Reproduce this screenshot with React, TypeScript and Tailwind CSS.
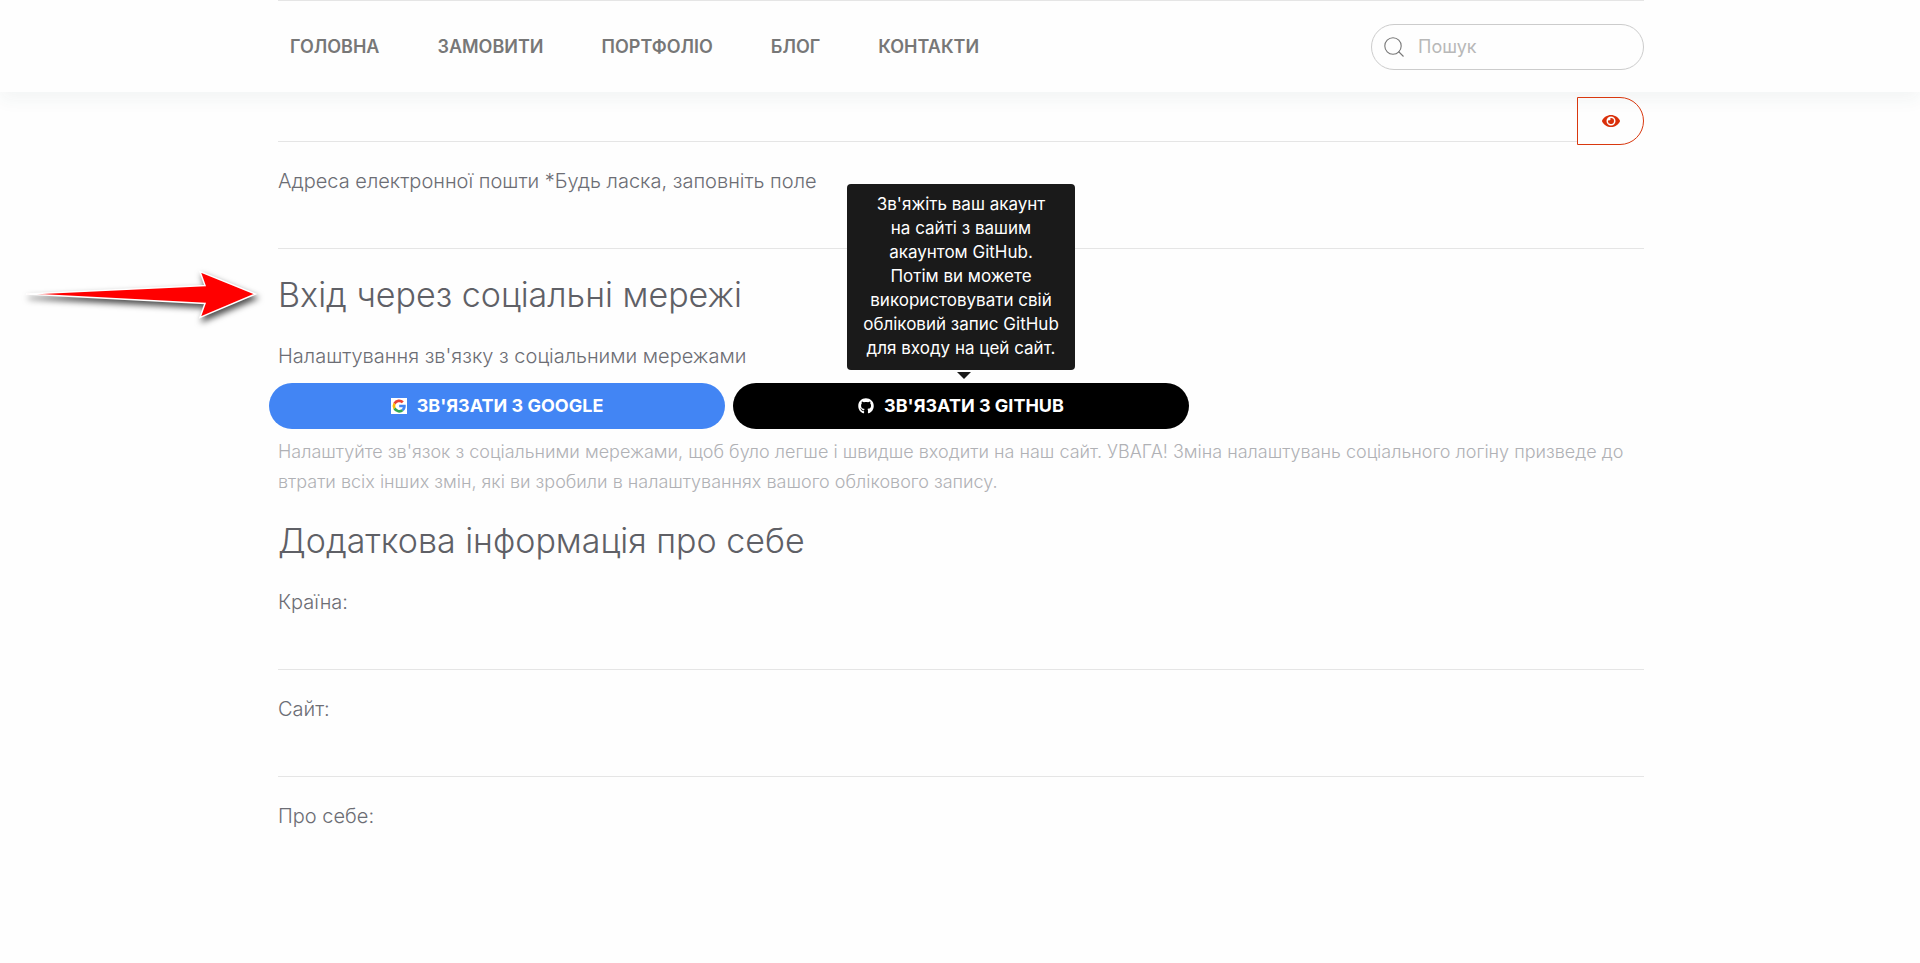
import { FaEye } from 'react-icons/fa';
import { FaGithub } from 'react-icons/fa6';

const links = ['Головна', 'Замовити', 'Портфоліо', 'Блог', 'Контакти'];

const App = () => {
  return (
    <div className="min-h-screen bg-[#fefefe] font-['Inter','Noto_Sans',sans-serif] text-xl text-[#6c6d74]">
      <Header />

      <main className="pl-0.5">
        <div className="relative mx-auto max-w-[1366px]">
          <button
            type="button"
            aria-label="Показати"
            className="absolute right-0 top-[5px] z-10 flex h-12 w-[67px] items-center justify-center rounded-r-full border border-[#d9380f] text-lg text-[#d9300a]"
          >
            <FaEye />
          </button>
          <div className="mr-[67px] h-[50px] border-b border-[#e5e5e5]" />

          <Field id="email" label="Адреса електронної пошти *Будь ласка, заповніть поле" />

          {/* Social login */}
          <section>
            <div className="relative mt-[21px]">
              <Arrow />
              <h2 className="text-[34px] font-light leading-[50px] text-[#5f6066]">Вхід через соціальні мережі</h2>
            </div>
            <p className="mt-[21px] font-light leading-[30px]">Налаштування зв'язку з соціальними мережами</p>
            <div className="-ml-[9px] mt-3 flex gap-2">
              <button
                type="button"
                className="flex h-[46px] w-[456px] items-center justify-center gap-2.5 rounded-full bg-[#4285f4] text-lg font-bold uppercase text-white"
              >
                <GoogleIcon />
                Зв'язати з Google
              </button>
              <div className="relative">
                <button
                  type="button"
                  aria-describedby="github-tip"
                  className="flex h-[46px] w-[456px] items-center justify-center gap-2.5 rounded-full bg-black text-lg font-bold uppercase text-white"
                >
                  <FaGithub className="text-base" />
                  Зв'язати з GitHub
                </button>
                <Tooltip />
              </div>
            </div>
            <p className="mt-2 text-lg font-light leading-[30px] text-[#b0b1b5]">
              Налаштуйте зв'язок з соціальними мережами, щоб було легше і швидше входити на наш сайт. УВАГА! Зміна
              налаштувань соціального логіну призведе до втрати всіх інших змін, які ви зробили в налаштуваннях вашого
              облікового запису.
            </p>
          </section>

          {/* About */}
          <section>
            <h2 className="mt-[22px] text-[34px] font-light leading-[44px] text-[#5f6066]">
              Додаткова інформація про себе
            </h2>
            <Field id="country" label="Країна:" />
            <Field id="site" label="Сайт:" />
            <div className="pt-6">
              <label htmlFor="about" className="block font-light leading-[30px]">Про себе:</label>
              <textarea id="about" className="mt-2 block h-20 w-full resize-none bg-transparent outline-none" />
            </div>
          </section>
        </div>
      </main>
    </div>
  );
};

const Header = () => (
  <header className="bg-[#fefefe] pl-0.5 shadow-[0_8px_16px_rgba(40,80,80,0.05)]">
    <div className="mx-auto flex h-[92px] max-w-[1366px] items-center justify-between border-t border-[#e5e5e5]">
      <nav className="flex gap-[58px] pl-3">
        {links.map((link) => (
          <a key={link} href="#" className="text-lg font-semibold uppercase text-[#777777]">
            {link}
          </a>
        ))}
      </nav>
      <label className="flex h-[46px] w-[273px] items-center gap-[14px] rounded-full border border-[#cccccc] pl-3 text-[#777777]">
        <svg width="20" height="20" viewBox="0 0 20 20" fill="none" stroke="currentColor" strokeWidth="1.1">
          <circle cx="9" cy="9" r="8.2" />
          <path d="M14.5 14.5 19.5 19.5" />
        </svg>
        <input
          type="search"
          placeholder="Пошук"
          aria-label="Пошук"
          className="w-48 bg-transparent text-lg outline-none placeholder:text-[#b8b8b8]"
        />
      </label>
    </div>
  </header>
);

type FieldProps = {
  id: string;
  label: string;
};

const Field = ({ id, label }: FieldProps) => (
  <div className="pt-6">
    <label htmlFor={id} className="block font-light leading-[30px]">{label}</label>
    <input id={id} type="text" className="mt-2 block h-[45px] w-full border-b border-[#e5e5e5] bg-transparent outline-none" />
  </div>
);

const Tooltip = () => (
  <div
    id="github-tip"
    role="tooltip"
    className="absolute bottom-full left-1/2 mb-[13px] w-[228px] -translate-x-1/2 rounded bg-[#1a1a1a] pb-2.5 pt-2 text-center text-[17px] leading-6 text-white"
  >
    Зв'яжіть ваш акаунт
    <br />
    на сайті з вашим
    <br />
    акаунтом GitHub.
    <br />
    Потім ви можете
    <br />
    використовувати свій
    <br />
    обліковий запис GitHub
    <br />
    для входу на цей сайт.
    <svg width="14" height="7" viewBox="0 0 14 7" className="absolute left-[110px] top-full mt-0.5">
      <path d="M0 0h14L7 7z" fill="#1a1a1a" />
    </svg>
  </div>
);

const Arrow = () => (
  <svg
    width="232"
    height="50"
    viewBox="0 0 232 50"
    className="absolute right-full top-0 mr-5 overflow-visible drop-shadow-[2px_4px_3px_rgba(0,0,0,0.7)]"
  >
    <path d="M0 24 179 15.500 174 1.500 229.500 24 174 47.500 179 33.500z" fill="#ff0000" stroke="#ffffff" strokeWidth="1.5" />
  </svg>
);

const GoogleIcon = () => (
  <svg width="16" height="16" viewBox="0 0 16 16">
    <path d="M0 0h16v16H0z" fill="#ffffff" />
    <path d="M2.400 4.700A6.700 6.700 0 0 1 12.800 3.300L10.900 5.200A4 4 0 0 0 4.600 6.400z" fill="#ea4335" />
    <path d="M2.400 4.700 4.600 6.400A4 4 0 0 0 4.600 9.600L2.400 11.300A6.700 6.700 0 0 1 2.400 4.700z" fill="#fbbc05" />
    <path d="M2.400 11.300 4.600 9.600A4 4 0 0 0 10.400 11.300L12.600 13A6.700 6.700 0 0 1 2.400 11.300z" fill="#34a853" />
    <path d="M8.200 6.700H14.700C15 9.300 14.400 11.500 12.600 13L10.400 11.300Q11.500 10.600 11.800 9.300H8.200z" fill="#4285f4" />
  </svg>
);

export default App;
